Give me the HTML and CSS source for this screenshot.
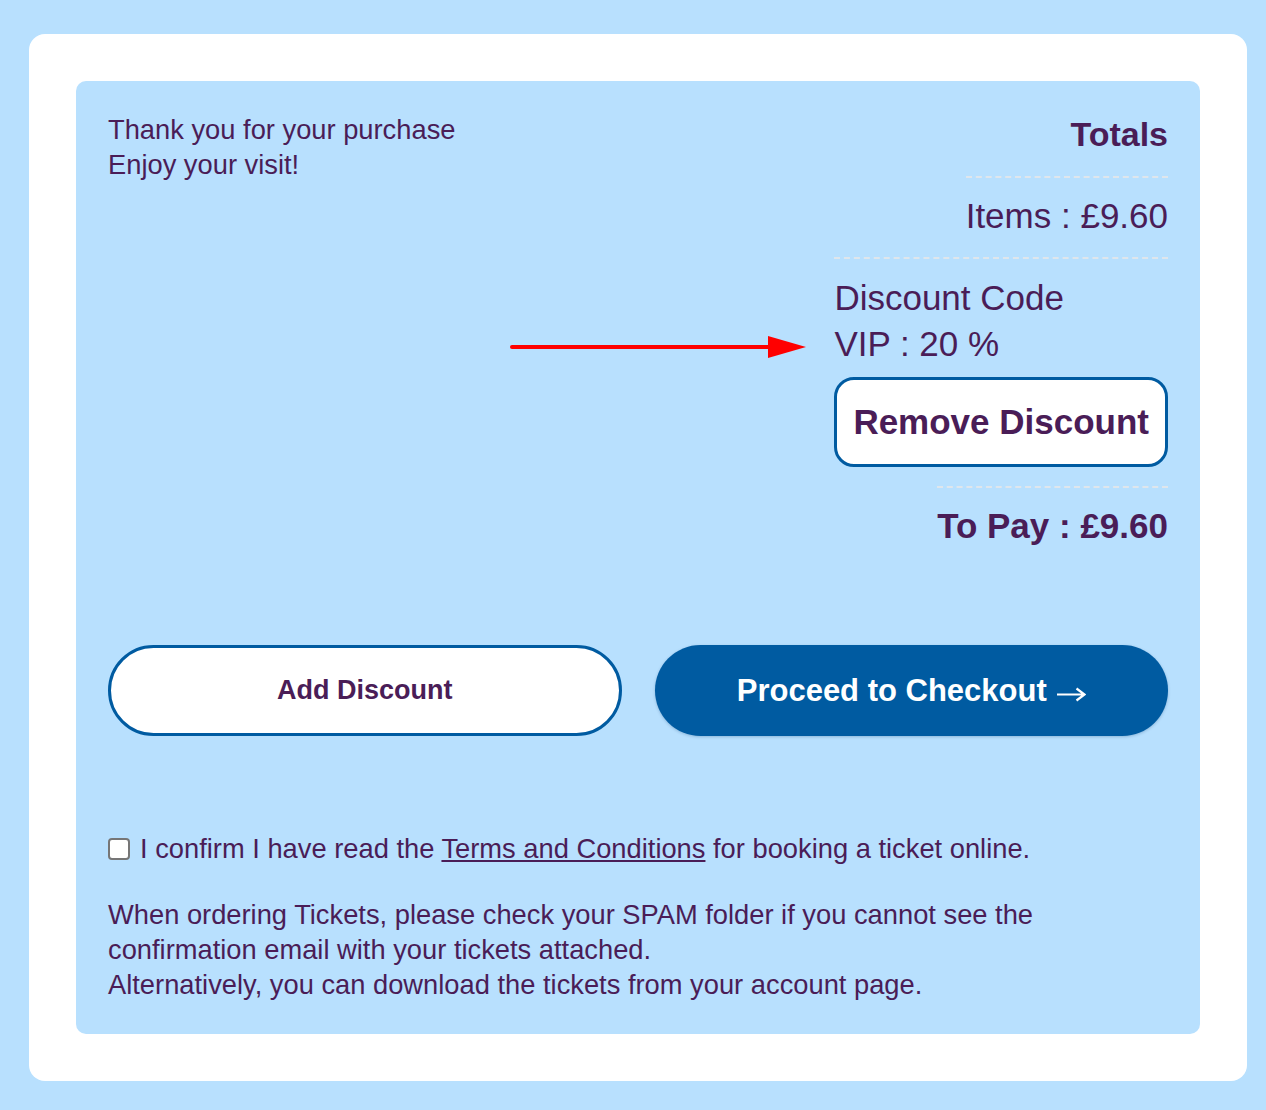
FILE: index.html
```html
<!DOCTYPE html>
<html lang="en">
<head>
  <meta charset="UTF-8" />
  <meta name="viewport" content="width=device-width, initial-scale=1.0" />
  <title>Basket</title>
  <link rel="stylesheet" href="styles.css">
</head>
<body>
  <div class="card">
    <div class="basket">
      <div class="summary">
        <div class="thanks">
          Thank you for your purchase<br />
          Enjoy your visit!
        </div>

        <div class="totals">
          <div class="totals-title">Totals</div>
          <div class="totals-row">Items : £9.60</div>
          <div class="totals-row discount">
            <div>Discount Code</div>
            <div>VIP : 20 %</div>
            <button class="remove-button">Remove Discount</button>
          </div>
          <div class="totals-row to-pay">To Pay : £9.60</div>
        </div>

        <!-- red pointer to the discount -->
        <svg class="pointer" width="300" height="30" viewBox="0 0 300 30">
          <line x1="2" y1="15" x2="262" y2="15" stroke="#ff0000" stroke-width="4" stroke-linecap="round" />
          <polygon points="258,4 296,15 258,26" fill="#ff0000" />
        </svg>
      </div>

      <div class="actions">
        <button class="add-button">Add Discount</button>
        <button class="checkout-button">
          Proceed to Checkout
          <svg class="checkout-arrow" width="30" height="16" viewBox="0 0 30 16">
            <path d="M1 8.5H28M20.5 2.5L28.5 8.5L20.5 14.5" fill="none" stroke="white" stroke-width="2.2" />
          </svg>
        </button>
      </div>

      <label class="confirm">
        <input type="checkbox" />
        <span>I confirm I have read the <a href="#">Terms and Conditions</a> for booking a ticket online.</span>
      </label>

      <p class="note">
        When ordering Tickets, please check your SPAM folder if you cannot see the confirmation email with your tickets attached.<br />
        Alternatively, you can download the tickets from your account page.
      </p>
    </div>
  </div>
</body>
</html>
```

FILE: styles.css
```css
body {
  margin: 0;
  padding: 34px 19px 29px 29px;
  background: #b8e0fe;
  font-family: 'Liberation Sans', Arial, sans-serif;
  color: #4a1d57;
}

.card {
  background: white;
  border-radius: 16px;
  padding: 47px;
}

.basket {
  background: #b8e0fe;
  border-radius: 10px;
  padding: 31px 32px 32px;
  font-size: 27.3px;
  line-height: 35px;
}

/* top part: message + totals */
.summary {
  display: flex;
  justify-content: space-between;
  position: relative;
}
.totals {
  display: flex;
  flex-direction: column;
  align-items: flex-end;
  font-size: 35px;
  line-height: 44px;
}
.totals-title {
  font-weight: bold;
  font-size: 34px;
}
.totals-row {
  border-top: 2px dashed #dfe6ec;
  margin-top: 20px;
  padding-top: 16px;
}
.totals-row.discount {
  line-height: 46px;
  margin-top: 19px;
}
.to-pay {
  font-weight: bold;
  margin-top: 19px;
}
.remove-button {
  display: block;
  margin-top: 10px;
  background: white;
  border: 3px solid #005ba1;
  border-radius: 20px;
  padding: 0 16px;
  height: 90px;
  font-family: inherit;
  font-size: 35px;
  font-weight: bold;
  color: #4a1d57;
  cursor: pointer;
}
.pointer {
  position: absolute;
  left: 402px;
  top: 220px;
}

/* buttons */
.actions {
  display: grid;
  grid-template-columns: 1fr 1fr;
  gap: 33px;
  margin-top: 97px;
}
.add-button,
.checkout-button {
  height: 91px;
  border-radius: 46px;
  font-family: inherit;
  font-weight: bold;
  cursor: pointer;
}
.add-button {
  background: white;
  border: 3px solid #005ba1;
  color: #4a1d57;
  font-size: 27px;
}
.checkout-button {
  display: flex;
  align-items: center;
  justify-content: center;
  gap: 9px;
  background: #005ba1;
  border: none;
  color: white;
  font-size: 31px;
  box-shadow: 0 1px 3px rgba(0, 60, 110, 0.25);
}
.checkout-arrow {
  margin-top: 6px;
}

/* terms + note */
.confirm {
  display: flex;
  align-items: center;
  gap: 10px;
  margin-top: 95px;
}
.confirm input {
  appearance: none;
  width: 22px;
  height: 22px;
  margin: 0;
  border: 2px solid #767676;
  border-radius: 4px;
  background: white;
}
.confirm a {
  color: inherit;
  text-decoration: underline;
}
.note {
  margin: 31px 0 0;
  max-width: 940px;
}
```
